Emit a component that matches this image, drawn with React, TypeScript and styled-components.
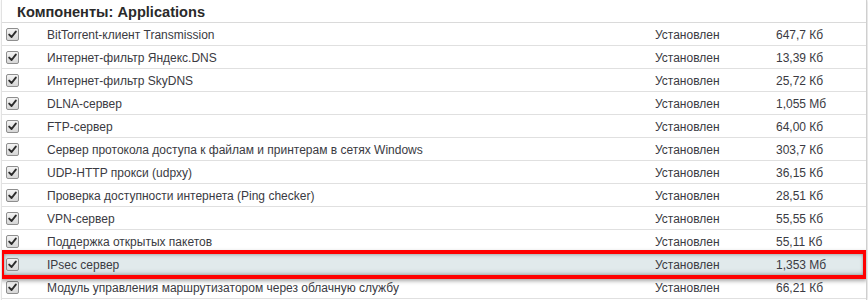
import React from "react";
import styled, { createGlobalStyle } from "styled-components";

type Component = {
	name: string;
	status: string;
	size: string;
	highlighted?: boolean;
};

const components: Component[] = [
	{ name: "BitTorrent-клиент Transmission", status: "Установлен", size: "647,7 Кб" },
	{ name: "Интернет-фильтр Яндекс.DNS", status: "Установлен", size: "13,39 Кб" },
	{ name: "Интернет-фильтр SkyDNS", status: "Установлен", size: "25,72 Кб" },
	{ name: "DLNA-сервер", status: "Установлен", size: "1,055 Мб" },
	{ name: "FTP-сервер", status: "Установлен", size: "64,00 Кб" },
	{
		name: "Сервер протокола доступа к файлам и принтерам в сетях Windows",
		status: "Установлен",
		size: "303,7 Кб",
	},
	{ name: "UDP-HTTP прокси (udpxy)", status: "Установлен", size: "36,15 Кб" },
	{
		name: "Проверка доступности интернета (Ping checker)",
		status: "Установлен",
		size: "28,51 Кб",
	},
	{ name: "VPN-сервер", status: "Установлен", size: "55,55 Кб" },
	{ name: "Поддержка открытых пакетов", status: "Установлен", size: "55,11 Кб" },
	{ name: "IPsec сервер", status: "Установлен", size: "1,353 Мб", highlighted: true },
	{
		name: "Модуль управления маршрутизатором через облачную службу",
		status: "Установлен",
		size: "66,21 Кб",
	},
];

const Checkbox = () => (
	<CheckBox>
		<svg width='9' height='9' viewBox='0 0 9 9'>
			<path
				d='M1.2 4.6 L3.6 7 L7.8 1.6'
				fill='none'
				stroke='#2b2b2b'
				strokeWidth='1.9'
				strokeLinecap='round'
				strokeLinejoin='round'
			/>
		</svg>
	</CheckBox>
);

export default function App() {
	return (
		<>
			<GlobalStyle />
			<Panel>
				<Header>Компоненты: Applications</Header>
				{components.map((c) => (
					<Row key={c.name} highlighted={c.highlighted}>
						<CheckCell>
							<Checkbox />
						</CheckCell>
						<Cell>{c.name}</Cell>
						<Cell>{c.status}</Cell>
						<Cell>{c.size}</Cell>
					</Row>
				))}
			</Panel>
		</>
	);
}

const GlobalStyle = createGlobalStyle`
	html, body {
		margin: 0;
		padding: 0;
		background: #ffffff;
	}
	body {
		font-family: "Liberation Sans", Arial, sans-serif;
		overflow: hidden;
	}
`;

const Panel = styled.div`
	width: 864px;
	height: 300px;
	overflow: hidden;
	margin-left: 1px;
	border-left: 1px solid #e2e2e2;
	border-right: 1px solid #cfcfcf;
	box-shadow: 1px 0 3px rgba(0, 0, 0, 0.15);
	background: #fff;
`;

const Header = styled.div`
	height: 22px;
	line-height: 24px;
	padding-left: 15px;
	font-size: 14.6px;
	font-weight: bold;
	color: #2a2a2a;
	border-bottom: 1px solid #dadada;
`;

const Row = styled.div<{ highlighted?: boolean }>`
	display: grid;
	grid-template-columns: 45px 608px 121px 1fr;
	align-items: center;
	height: 22px;
	border-bottom: 1px solid #e0e0e0;
	font-size: 12px;
	color: #3a3a42;
	position: relative;
	background: ${(p) => (p.highlighted ? "#e1eaec" : "transparent")};
	${(p) =>
		p.highlighted &&
		`
		box-shadow: inset 0 0 6px rgba(0, 0, 0, 0.3);
		z-index: 1;

		&::after {
			content: "";
			position: absolute;
			top: -3px;
			bottom: -4px;
			left: -2px;
			right: -1px;
			border: 4px solid #ff0000;
			box-shadow: 0 2px 4px rgba(0, 0, 0, 0.35), inset 0 0 3px rgba(0, 0, 0, 0.25);
			pointer-events: none;
		}
	`}
`;

const CheckCell = styled.div`
	display: flex;
	align-items: center;
	padding-left: 4px;
`;

const CheckBox = styled.span`
	width: 11px;
	height: 11px;
	border: 1px solid #8e8e8e;
	border-radius: 2px;
	background: linear-gradient(#f4f4f4, #d6d6d6);
	display: flex;
	align-items: center;
	justify-content: center;
`;

const Cell = styled.div`
	white-space: nowrap;
	overflow: hidden;
	padding-top: 1px;
`;
